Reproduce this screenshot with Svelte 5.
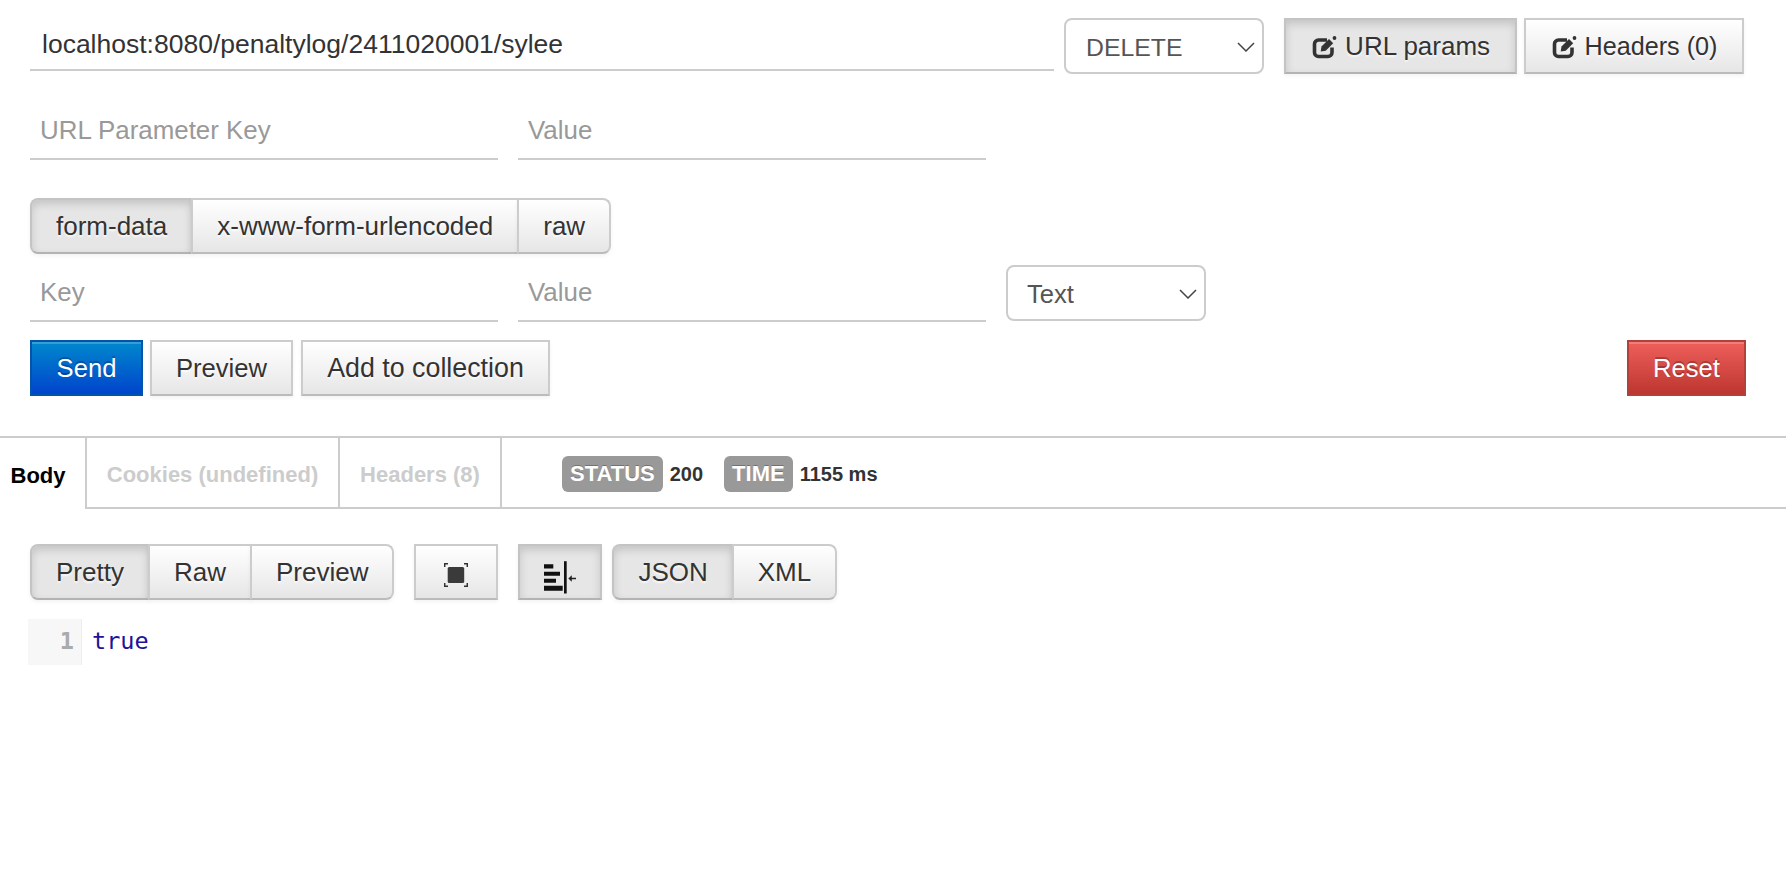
<script>
  const modes = ["form-data", "x-www-form-urlencoded", "raw"];
  const views = ["Pretty", "Raw", "Preview"];
  const formats = ["JSON", "XML"];
</script>

{#snippet editIcon()}
  <svg class="edit" width="26" height="24" viewBox="0 0 26 24" fill="none">
    <path d="M20 12.500v5a4 4 0 0 1-4 4H6.500a4 4 0 0 1-4-4V9a4 4 0 0 1 4-4H15" stroke="#333" stroke-width="3.600" />
    <path d="M9.500 11.500l-.8 5 5-.8 7.500-7.500-4.200-4.200z" fill="#333" />
    <circle cx="22.500" cy="3" r="1.900" fill="#333" />
  </svg>
{/snippet}

{#snippet chevron()}
  <svg class="chevron" width="18" height="10" viewBox="0 0 18 10" fill="none">
    <path d="M1 1l8 8 8-8" stroke="#444" stroke-width="1.500" />
  </svg>
{/snippet}

<div class="page">
  <div class="row top">
    <input class="field url" type="text" value="localhost:8080/penaltylog/2411020001/sylee" />
    <div class="select method">
      <select><option>DELETE</option></select>
      {@render chevron()}
    </div>
    <button class="btn params active">{@render editIcon()} URL params</button>
    <button class="btn headers">{@render editIcon()} Headers (0)</button>
  </div>

  <div class="row params-row">
    <input class="field half" type="text" placeholder="URL Parameter Key" />
    <input class="field half" type="text" placeholder="Value" />
  </div>

  <div class="group modes">
    {#each modes as mode, i}
      <button class="btn" class:active={i === 0}>{mode}</button>
    {/each}
  </div>

  <div class="row body-row">
    <input class="field half" type="text" placeholder="Key" />
    <input class="field half" type="text" placeholder="Value" />
    <div class="select kind">
      <select><option>Text</option></select>
      {@render chevron()}
    </div>
  </div>

  <div class="row actions">
    <button class="btn primary">Send</button>
    <button class="btn preview">Preview</button>
    <button class="btn collection">Add to collection</button>
    <button class="btn danger">Reset</button>
  </div>

  <div class="tabs">
    <div class="tab current">Body</div>
    <div class="tab cookies">Cookies (undefined)</div>
    <div class="tab headers-tab">Headers (8)</div>
    <div class="meta">
      <span class="label">STATUS</span>
      <span class="num">200</span>
      <span class="label time">TIME</span>
      <span class="num">1155 ms</span>
    </div>
  </div>

  <div class="row view-row">
    <div class="group views">
      {#each views as view, i}
        <button class="btn" class:active={i === 0}>{view}</button>
      {/each}
    </div>
    <button class="btn icon fullscreen" aria-label="Fullscreen">
      <svg width="24" height="24" viewBox="0 0 24 24" fill="none">
        <rect x="3.700" y="4" width="16.500" height="16" rx="1.500" fill="#3a3a3a" />
        <path d="M0.700 4V0.700H4M20 0.700h3.300V4M23.300 20v3.300H20M4 23.300H0.700V20" stroke="#333" stroke-width="1.500" />
      </svg>
    </button>
    <button class="btn icon wrap active" aria-label="Wrap lines">
      <svg width="32" height="38" viewBox="0 0 32 38">
        <path d="M0 8.200h9.300v4.300H0zM0 15.800h16v4H0zM0 22.800h12v4H0zM0 29.800h18.700v5H0z" fill="#111" />
        <path d="M20 5.200h2.700v32.300H20z" fill="#111" />
        <path d="M27 21.800h5v1.500h-5zM24.300 22.500l3.500-3.200v6.400z" fill="#222" />
      </svg>
    </button>
    <div class="group formats">
      {#each formats as format, i}
        <button class="btn" class:active={i === 0}>{format}</button>
      {/each}
    </div>
  </div>

  <div class="code">
    <div class="gutter">1</div>
    <div class="line">true</div>
  </div>
</div>

<style>
  :global(body) {
    margin: 0;
    background: #fff;
    font-family: "Liberation Sans", Arial, sans-serif;
    color: #333;
  }
  .page {
    padding-top: 18px;
    width: 1786px;
  }
  .row {
    display: flex;
    padding-left: 30px;
  }
  .field {
    box-sizing: border-box;
    height: 52px;
    border: 0;
    border-bottom: 2px solid #ccc;
    outline: 0;
    padding: 0 10px 5px;
    font: 25.900px "Liberation Sans", Arial, sans-serif;
    color: #333;
    background: transparent;
  }
  .field::placeholder {
    color: #999;
    opacity: 1;
  }
  .url {
    width: 1024px;
    margin: 1px 10px 0 0;
    padding: 0 12px;
    font-size: 26.500px;
  }
  .half {
    width: 468px;
    margin-right: 20px;
  }
  .select {
    position: relative;
    box-sizing: border-box;
    border: 2px solid #ccc;
    border-radius: 8px;
    height: 56px;
  }
  .select select {
    appearance: none;
    border: 0;
    outline: 0;
    background: transparent;
    width: 100%;
    height: 100%;
    padding: 2px 0 0 19px;
    font: 25.600px "Liberation Sans", Arial, sans-serif;
    color: #555;
  }
  .chevron {
    position: absolute;
    right: 7px;
    top: 22px;
  }
  .method {
    width: 200px;
    margin-right: 20px;
  }
  .method select {
    padding-left: 20px;
    font-size: 24.800px;
  }
  .kind {
    width: 200px;
  }
  .btn {
    box-sizing: border-box;
    height: 56px;
    margin: 0;
    padding: 0 24px;
    border: 2px solid #ccc;
    border-bottom-color: #bbb;
    border-radius: 0;
    background: linear-gradient(#fff, #e6e6e6);
    box-shadow: 0 2px 4px rgba(0, 0, 0, 0.05);
    font: 26px "Liberation Sans", Arial, sans-serif;
    color: #333;
    text-shadow: 0 2px 2px rgba(255, 255, 255, 0.75);
  }
  .btn.active {
    background: #e6e6e6;
    border-color: #c4c4c4;
    border-bottom-color: #b3b3b3;
    box-shadow: inset 0 4px 8px rgba(0, 0, 0, 0.15), 0 2px 4px rgba(0, 0, 0, 0.05);
  }
  .edit {
    vertical-align: -4px;
  }
  .params {
    width: 233px;
    padding: 0 0 0 1px;
    margin-right: 7px;
  }
  .headers {
    width: 220px;
    padding: 0 0 0 1px;
    font-size: 25.200px;
  }
  .params-row {
    margin-top: 34px;
  }
  .group {
    display: flex;
    width: fit-content;
  }
  .group .btn {
    margin-left: -2px;
  }
  .group .btn:first-child {
    margin-left: 0;
    border-radius: 8px 0 0 8px;
  }
  .group .btn:last-child {
    border-radius: 0 8px 8px 0;
  }
  .modes {
    margin: 38px 0 0 30px;
  }
  .body-row {
    margin-top: 11px;
    height: 57px;
    align-items: flex-end;
  }
  .kind {
    align-self: flex-start;
  }
  .actions {
    margin-top: 18px;
    padding-right: 40px;
  }
  .primary {
    width: 113px;
    padding: 0;
    margin-right: 7px;
    border-color: #0055aa;
    background: linear-gradient(#0088cc, #0044cc);
    box-shadow: inset 0 2px 0 rgba(255, 255, 255, 0.2);
    font-size: 25.600px;
    color: #fff;
    text-shadow: 0 -2px 0 rgba(0, 0, 0, 0.25);
  }
  .preview {
    width: 143px;
    padding: 0;
    margin-right: 8px;
    font-size: 25.600px;
  }
  .collection {
    width: 249px;
    padding: 0;
    font-size: 26.800px;
  }
  .danger {
    width: 119px;
    padding: 0;
    margin-left: auto;
    border-color: #b3403a;
    background: linear-gradient(#ee5f5b, #bd362f);
    box-shadow: inset 0 2px 0 rgba(255, 255, 255, 0.2);
    font-size: 25.600px;
    color: #fff;
    text-shadow: 0 -2px 0 rgba(0, 0, 0, 0.25);
  }
  .tabs {
    display: flex;
    box-sizing: border-box;
    margin-top: 40px;
    height: 73px;
    border-top: 2px solid #ccc;
    font-size: 22px;
    font-weight: bold;
  }
  .tab {
    box-sizing: border-box;
    display: flex;
    align-items: center;
    justify-content: center;
    padding-top: 5px;
    border-right: 2px solid #ccc;
    border-bottom: 2px solid #ccc;
    color: #ccc;
  }
  .tab.current {
    width: 87px;
    padding-right: 9px;
    color: #000;
    border-bottom: 0;
  }
  .cookies {
    width: 253px;
  }
  .headers-tab {
    width: 162px;
  }
  .meta {
    flex: 1;
    display: flex;
    align-items: center;
    padding: 3px 0 0 60px;
    border-bottom: 2px solid #ccc;
    font-size: 20px;
  }
  .label {
    box-sizing: border-box;
    height: 36px;
    line-height: 35px;
    padding: 0 8px;
    border-radius: 6px;
    background: #999;
    color: #fff;
    font-size: 22px;
    text-shadow: 0 -1px 0 rgba(0, 0, 0, 0.25);
  }
  .num {
    margin-left: 7px;
    color: #333;
  }
  .time {
    margin-left: 21px;
  }
  .view-row {
    margin-top: 35px;
  }
  .icon {
    display: flex;
    align-items: center;
    justify-content: center;
    width: 84px;
    padding: 0;
  }
  .icon svg {
    margin-top: 5px;
  }
  .fullscreen {
    margin-left: 20px;
  }
  .wrap {
    margin-left: 20px;
  }
  .formats {
    margin-left: 10px;
  }
  .code {
    display: flex;
    margin: 19px 0 0 28px;
    font: 23.500px/44px "DejaVu Sans Mono", monospace;
    height: 46px;
  }
  .gutter {
    box-sizing: border-box;
    width: 54px;
    padding-right: 7px;
    text-align: right;
    background: #f7f7f7;
    border-right: 1px solid #eee;
    color: #aaa;
    font-weight: bold;
  }
  .line {
    padding-left: 10px;
    color: #221199;
  }
</style>
